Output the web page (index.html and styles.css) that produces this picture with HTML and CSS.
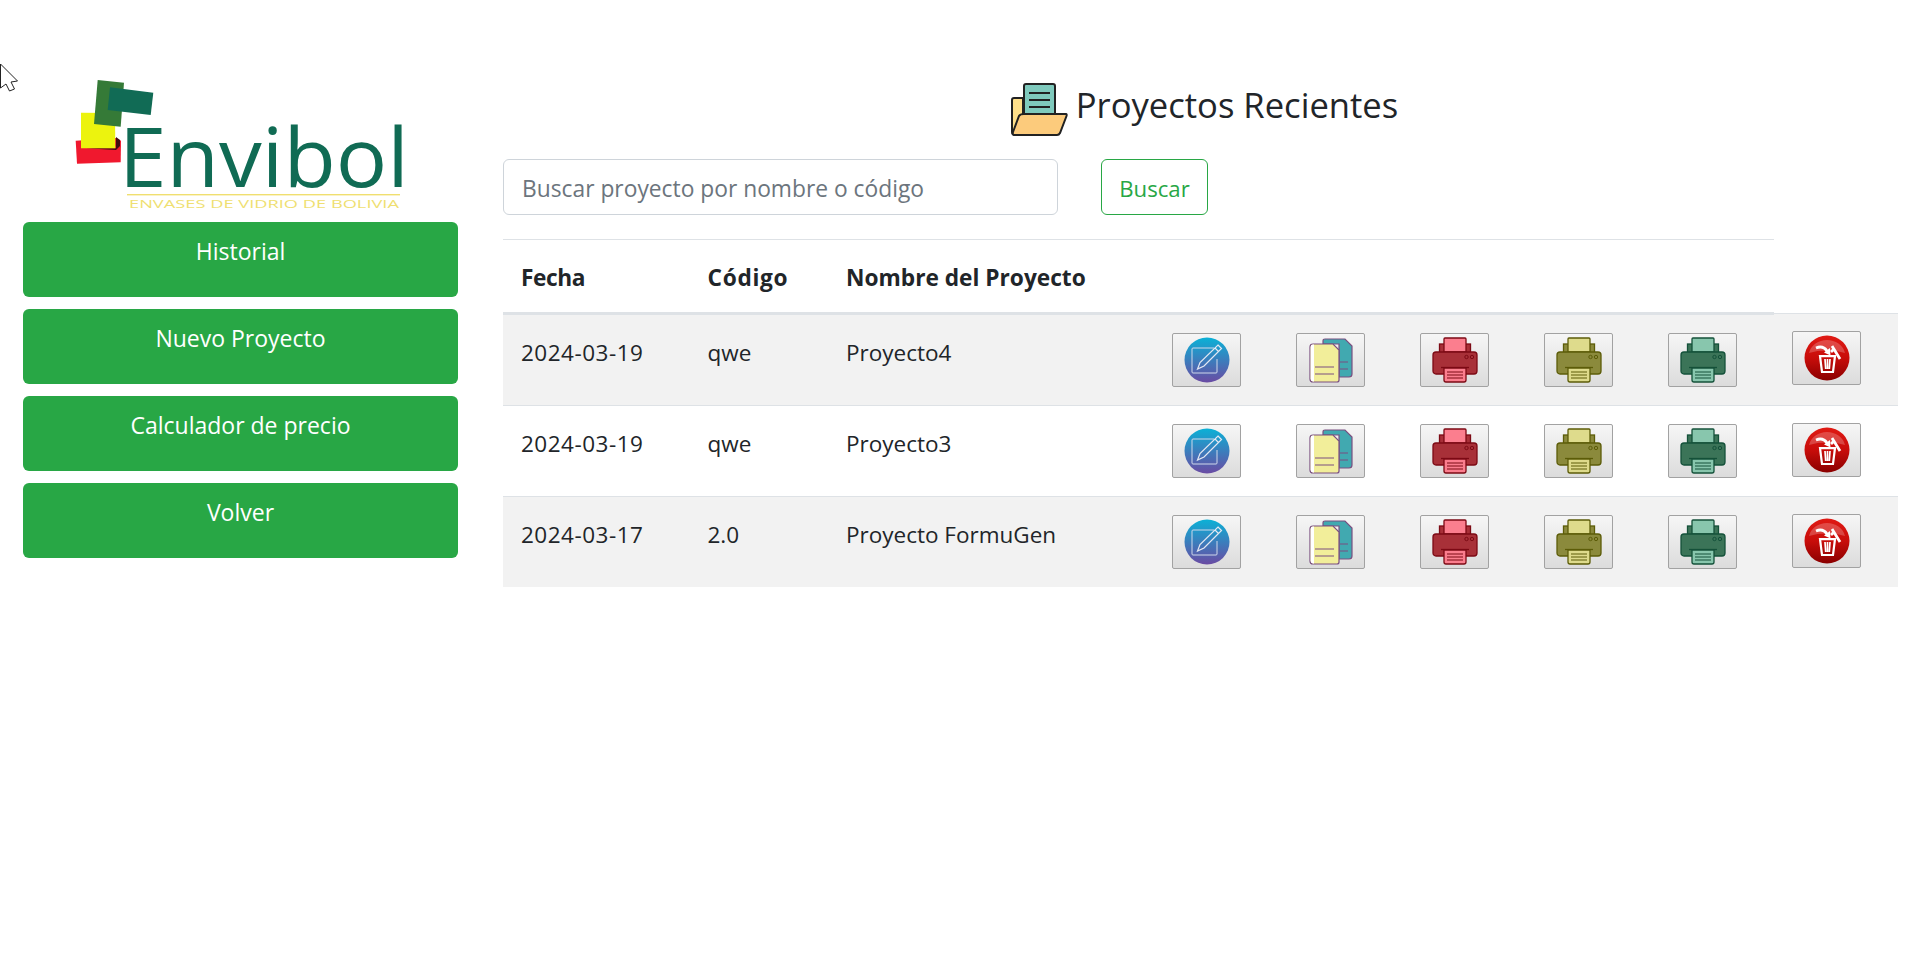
FILE: index.html
```html
<!DOCTYPE html>
<html lang="es">
<head>
<meta charset="utf-8">
<title>Proyectos Recientes</title>
<link rel="stylesheet" href="styles.css">
</head>
<body>
<svg class="cursor" width="20" height="30" viewBox="0 0 20 30"><path d="M0.5 1 L17.5 18 L11 19 L14.5 26 L9.5 28 L6 21 L0.5 25 Z" fill="#fff" stroke="#222" stroke-width="1"/></svg>
<div class="layout">
  <aside class="sidebar">
    <svg class="logo" width="435" height="148" viewBox="23 70 435 148">
      <polygon points="75.7,140.7 116,138 121,140.7 120.7,162.3 77,163.7" fill="#f0182e"/>
      <polygon points="86,148.3 116,148.3 116,137 120,140 120,146 116,150" fill="#400a10"/>
      <polygon points="81,112.7 115,113 115.3,148.3 81,148.3" fill="#ecf30e"/>
      <polygon points="97.7,80 124,82.7 120.7,126.7 94,124" fill="#357a37"/>
      <polygon points="110,87.3 153.3,92.7 150.7,115 107.7,110" fill="#116b55"/>
      <text class="logo-name" x="119" y="187" textLength="290" lengthAdjust="spacingAndGlyphs">Envibol</text>
      <rect x="127" y="194" width="273" height="1.4" fill="#f0df70"/>
      <text class="logo-tag" x="129" y="207.5" textLength="270" lengthAdjust="spacingAndGlyphs">ENVASES DE VIDRIO DE BOLIVIA</text>
    </svg>
    <nav class="menu">
      <a class="menu-btn">Historial</a>
      <a class="menu-btn">Nuevo Proyecto</a>
      <a class="menu-btn">Calculador de precio</a>
      <a class="menu-btn">Volver</a>
    </nav>
  </aside>
  <main class="content">
    <h1 class="title">
      <svg width="57" height="54" viewBox="0 0 57 54">
        <path d="M4 52 Q1 52 1 49 V17 Q1 15 3 15 H12 V40 H44 V22 H40 L38 52Z" fill="#ffe08a" stroke="#222" stroke-width="2"/>
        <rect x="13" y="1" width="31" height="40" rx="2" fill="#7fcabd" stroke="#222" stroke-width="2"/>
        <path d="M18 10 H39 M18 17 H39 M18 24 H39" stroke="#222" stroke-width="2"/>
        <path d="M13 31 H55 Q56 31 55.5 33 L49 50 Q48 52 46 52 H4 Q1 52 2 49 L8 33 Q9 31 13 31Z" fill="#fccb7c" stroke="#222" stroke-width="2"/>
      </svg>
      <span>Proyectos Recientes</span>
    </h1>
    <form class="search">
      <input class="search-input" type="text" placeholder="Buscar proyecto por nombre o código">
      <button class="search-btn" type="button">Buscar</button>
    </form>
    <table class="projects">
      <colgroup><col class="c1"><col class="c2"><col class="c3"><col class="ca"><col class="ca"><col class="ca"><col class="ca"><col class="ca"><col class="ca"></colgroup>
      <thead>
        <tr><th class="th-date">Fecha</th><th class="th-code">Código</th><th>Nombre del Proyecto</th><th></th><th></th><th></th><th></th><th></th></tr>
      </thead>
      <tbody id="rows"></tbody>
    </table>
  </main>
</div>
<svg width="0" height="0" class="defs">
  <defs>
    <linearGradient id="gblue" x1="0" y1="0" x2="0" y2="1"><stop offset="0" stop-color="#0bb1d6"/><stop offset="1" stop-color="#6a4ba3"/></linearGradient>
    <linearGradient id="gred" x1="0" y1="0" x2="0" y2="1"><stop offset="0" stop-color="#e01a14"/><stop offset=".5" stop-color="#c80d0a"/><stop offset="1" stop-color="#8a0000"/></linearGradient>
    <symbol id="i-edit" viewBox="0 0 46 46">
      <circle cx="23" cy="23" r="22.5" fill="url(#gblue)"/>
      <path d="M30 11 H9 Q8 11 8 12 V35 Q8 36 9 36 H32 Q33 36 33 35 V22" fill="none" stroke="#cfd8ea" stroke-width="1"/>
      <path d="M34 8 L37.500 11.500 L20 29 L13.500 32 L16 25.500 Z M31 11 L34.500 14.500" fill="none" stroke="#e3e8f3" stroke-width="1.2"/>
    </symbol>
    <symbol id="i-copy" viewBox="0 0 46 46">
      <path d="M15 4 Q15 2 17 2 H37 L44 9 V37 Q44 40 41 40 H31 V7 H15Z" fill="#41a9b0" stroke="#7a4f80" stroke-width="1.200"/>
      <path d="M32 25 H40 M32 32 H40" stroke="#7a4f80" stroke-width="1.200"/>
      <path d="M2 10 Q2 7 5 7 H25 L31 13 V43 Q31 45 29 45 H5 Q2 45 2 42Z" fill="#f2ee9a" stroke="#7a4f80" stroke-width="1.200"/>
      <path d="M5 7.600 H6 V44.400 H5 Q2.600 44.400 2.600 42 V10 Q2.600 7.600 5 7.600Z" fill="#fff"/>
      <path d="M7 30 H26 M7 37 H26" stroke="#7a4f80" stroke-width="1.200"/>
    </symbol>
    <symbol id="i-print" viewBox="0 0 46 46">
      <rect x="7.500" y="7" width="31" height="12" fill="var(--mid)" stroke="var(--dark)" stroke-width="1.300"/>
      <path d="M12 15 V2 Q12 1 13 1 H33 Q34 1 34 2 V15Z" fill="var(--light)" stroke="var(--dark)" stroke-width="1.300"/>
      <rect x="1" y="15" width="44" height="22" rx="3" fill="var(--mid)" stroke="var(--dark)" stroke-width="1.300"/>
      <circle cx="34.500" cy="20" r="1.700" fill="none" stroke="var(--dark)" stroke-width="1"/>
      <circle cx="40" cy="20" r="1.700" fill="none" stroke="var(--dark)" stroke-width="1"/>
      <path d="M9 30.500 H37" stroke="var(--dark)" stroke-width="1.300"/>
      <path d="M12 31 H34 V43 Q34 45 32 45 H14 Q12 45 12 43Z" fill="var(--light)" stroke="var(--dark)" stroke-width="1.300"/>
      <path d="M15 35 H31 M15 38 H31 M15 41 H31" stroke="var(--dark)" stroke-width="1.200"/>
    </symbol>
    <symbol id="i-del" viewBox="0 0 46 46">
      <circle cx="23" cy="23" r="22.500" fill="url(#gred)"/>
      <path d="M5 18 A18.500 17 0 0 1 41 18 A30 12 0 0 0 5 18Z" fill="#fff" opacity=".22"/>
      <path d="M12 13 Q19 10 23 16" fill="none" stroke="#fff" stroke-width="2.800"/>
      <path d="M20 17.500 L26.500 20.500 L26 13Z" fill="#fff"/>
      <path d="M28 11 L36 24 M30 14 L27 17" fill="none" stroke="#fff" stroke-width="2.800"/>
      <path d="M16 21 H31 L29 37 H18Z" fill="none" stroke="#fff" stroke-width="2.200"/>
      <path d="M15 21.500 H32 M21 24 L21.700 34 M23.500 24 V34 M26 24 L25.300 34" stroke="#fff" stroke-width="1.700"/>
    </symbol>
  </defs>
</svg>
<script src="app.js"></script>
</body>
</html>
```

FILE: app.js
```js
var data = [
  ["2024-03-19", "qwe", "Proyecto4"],
  ["2024-03-19", "qwe", "Proyecto3"],
  ["2024-03-17", "2.0", "Proyecto FormuGen"]
];
var icons = [
  ["i-edit", ""], ["i-copy", ""], ["i-print", "red"],
  ["i-print", "olive"], ["i-print", "green"], ["i-del", "up"]
];
var html = data.map(function (r) {
  var cells = r.map(function (t, n) {
    return (n === 0 ? '<td class="date">' : "<td>") + t + "</td>";
  }).join("");
  var acts = icons.map(function (i) {
    return '<td class="act"><button class="act-btn ' + i[1] + '" type="button"><svg width="46" height="46"><use href="#' + i[0] + '"/></svg></button></td>';
  }).join("");
  return "<tr>" + cells + acts + "</tr>";
}).join("");
document.getElementById("rows").innerHTML = html;
```

FILE: styles.css
```css
* { box-sizing: border-box; }
html, body { margin: 0; padding: 0; background: #fff; }
body {
  font-family: "Open Sans", "Noto Sans", sans-serif;
  font-size: 22.5px;
  line-height: 36px;
  color: #212529;
  height: 966px;
  overflow: hidden;
  position: relative;
}
.defs { position: absolute; }
.cursor { position: absolute; left: 0; top: 63px; }
.layout { display: flex; }
.sidebar { width: 503px; padding: 70px 45px 0 23px; flex: none; }
.logo { display: block; margin-bottom: 4px; }
.logo-name { font-family: "Open Sans", sans-serif; font-weight: 400; font-size: 83px; fill: #106b54; }
.logo-tag { font-family: "Open Sans", sans-serif; font-size: 11.5px; fill: #efdf72; }
.menu { display: flex; flex-direction: column; gap: 12px; }
.menu-btn {
  display: block;
  height: 75px;
  padding: 11px 12px 0;
  background: #28a745;
  border-radius: 6px;
  color: #fff;
  font-size: 23px;
  text-align: center;
}
.content { flex: none; width: 1395px; padding-top: 83px; }
.title {
  margin: 0 0 23px;
  display: flex;
  justify-content: center;
  align-items: flex-start;
  gap: 8px;
  padding-left: 8px;
  height: 53px;
  font-size: 34.600px;
  font-weight: 520;
  line-height: 10px;
}
.title span { padding-top: 15px; line-height: 14px; }
.search { display: flex; gap: 43px; margin-bottom: 24px; }
.search-input {
  width: 555px;
  height: 56px;
  padding: 2px 18px 0;
  border: 1px solid #ced4da;
  border-radius: 6px;
  font: inherit;
  font-size: 22.800px;
  outline: none;
}
.search-input::placeholder { color: #6c757d; opacity: 1; }
.search-btn {
  width: 107px;
  height: 56px;
  padding: 3px 0 0;
  background: #fff;
  border: 1px solid #28a745;
  border-radius: 6px;
  color: #28a745;
  font: inherit;
  font-size: 22.200px;
}
.projects { width: 1395px; table-layout: fixed; border-collapse: collapse; }
.c1 { width: 186.500px; }
.c2 { width: 138.500px; }
.c3 { width: 326px; }
.ca { width: 124px; }
.projects th {
  text-align: left;
  font-weight: 700;
  font-size: 22.700px;
  padding: 20px 18px 16px;
  border-top: 1px solid #dee2e6;
  border-bottom: 3px solid #dee2e6;
  vertical-align: top;
}
.projects th.th-date { letter-spacing: -0.400px; }
.projects th.th-code { letter-spacing: 0.700px; }
.projects td {
  padding: 20px 18px 0;
  border-top: 1px solid #dee2e6;
  vertical-align: top;
}
.projects td.date { letter-spacing: 0.500px; }
.projects tbody tr:nth-child(odd) td { background: #f2f2f2; }
.projects td.act { padding: 18px 18px 18px; }
.act-btn {
  width: 69px;
  height: 54px;
  padding: 0;
  border: 1.500px solid #a2a2a2;
  border-radius: 2px;
  background: linear-gradient(#f6f6f6, #dcdcdc);
  display: flex;
  align-items: center;
  justify-content: center;
}
.act-btn.up { position: relative; top: -1px; }
.act-btn.red { --light: #fb7e8e; --mid: #a83038; --dark: #7c0a14; }
.act-btn.olive { --light: #dedb8c; --mid: #8b8a3c; --dark: #5c5c08; }
.act-btn.green { --light: #88c6ad; --mid: #3b7458; --dark: #14513a; }
```
